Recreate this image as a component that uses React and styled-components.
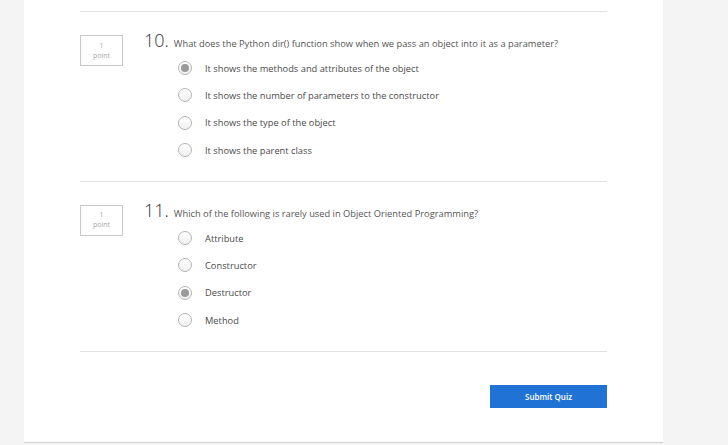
import React from 'react';
import styled, { createGlobalStyle } from 'styled-components';

const GlobalStyle = createGlobalStyle`
    html, body {
        margin: 0;
        padding: 0;
        background: #f4f4f4;
        font-family: "Open Sans", "Liberation Sans", sans-serif;
    }
`;

const Page = styled.div`
    width: 728px;
    height: 445px;
    overflow: hidden;
    background: #f4f4f4;
`;

const Panel = styled.div`
    margin-left: 24px;
    width: 639px;
    height: 443px;
    box-sizing: border-box;
    padding: 11px 56px 0;
    background: #fff;
    border-bottom: 1px solid #cfcfcf;
`;

const Divider = styled.div`
    height: 1px;
    background: #e2e2e2;
`;

const QuestionBlock = styled.div`
    display: flex;
    align-items: flex-start;
    padding: 20px 0 17.3px;
`;

const PointBox = styled.div`
    margin-top: 3px;
    width: 43px;
    height: 31px;
    box-sizing: border-box;
    border: 1px solid #c8c8c8;
    display: flex;
    flex-direction: column;
    align-items: center;
    justify-content: center;
    font-size: 7px;
    line-height: 10px;
    color: #a8a8a8;
`;

const Body = styled.div`
    margin-left: 21px;
    flex: 1;
`;

const Header = styled.div`
    display: flex;
    align-items: baseline;
    height: 20px;
`;

const Number = styled.span`
    font-size: 18px;
    font-weight: 300;
    color: #333;
    line-height: 17px;
    margin-right: 5px;
`;

const Prompt = styled.span`
    font-size: 9.3px;
    color: #555;
`;

const Options = styled.div`
    margin-top: 2.5px;
    padding-left: 34px;
`;

const Option = styled.label`
    display: flex;
    align-items: center;
    height: 27.3px;
    font-size: 9.3px;
    color: #4a4a4a;
`;

const Radio = styled.span`
    width: 14px;
    height: 14px;
    box-sizing: border-box;
    border-radius: 50%;
    border: 1px solid #b5b5b5;
    background: linear-gradient(#fff, #f0f0f0);
    margin-right: 13px;
    display: flex;
    align-items: center;
    justify-content: center;

    &::after {
        content: "";
        width: 8px;
        height: 8px;
        border-radius: 50%;
        background: ${p => (p.$checked ? '#9a9a9a' : 'transparent')};
    }
`;

const Footer = styled.div`
    display: flex;
    justify-content: flex-end;
    padding-top: 33px;
`;

const SubmitButton = styled.button`
    width: 117px;
    height: 23px;
    border: none;
    background: #2073d4;
    color: #fff;
    font-family: "Open Sans", "Liberation Sans", sans-serif;
    font-size: 8px;
    font-weight: 600;
    padding: 0;
`;

const questions = [
    {
        num: '10.',
        text: 'What does the Python dir() function show when we pass an object into it as a parameter?',
        options: [
            'It shows the methods and attributes of the object',
            'It shows the number of parameters to the constructor',
            'It shows the type of the object',
            'It shows the parent class',
        ],
        checked: 0,
    },
    {
        num: '11.',
        text: 'Which of the following is rarely used in Object Oriented Programming?',
        options: ['Attribute', 'Constructor', 'Destructor', 'Method'],
        checked: 2,
    },
];

const Question = ({ q }) => (
    <QuestionBlock>
        <PointBox>
            <span>1</span>
            <span>point</span>
        </PointBox>
        <Body>
            <Header>
                <Number>{q.num}</Number>
                <Prompt>{q.text}</Prompt>
            </Header>
            <Options>
                {q.options.map((o, i) => (
                    <Option key={o}>
                        <Radio $checked={i === q.checked} />
                        {o}
                    </Option>
                ))}
            </Options>
        </Body>
    </QuestionBlock>
);

export default function App() {
    return (
        <Page>
            <GlobalStyle />
            <Panel>
                <Divider />
                {questions.map(q => (
                    <React.Fragment key={q.num}>
                        <Question q={q} />
                        <Divider />
                    </React.Fragment>
                ))}
                <Footer>
                    <SubmitButton>Submit Quiz</SubmitButton>
                </Footer>
            </Panel>
        </Page>
    );
}
